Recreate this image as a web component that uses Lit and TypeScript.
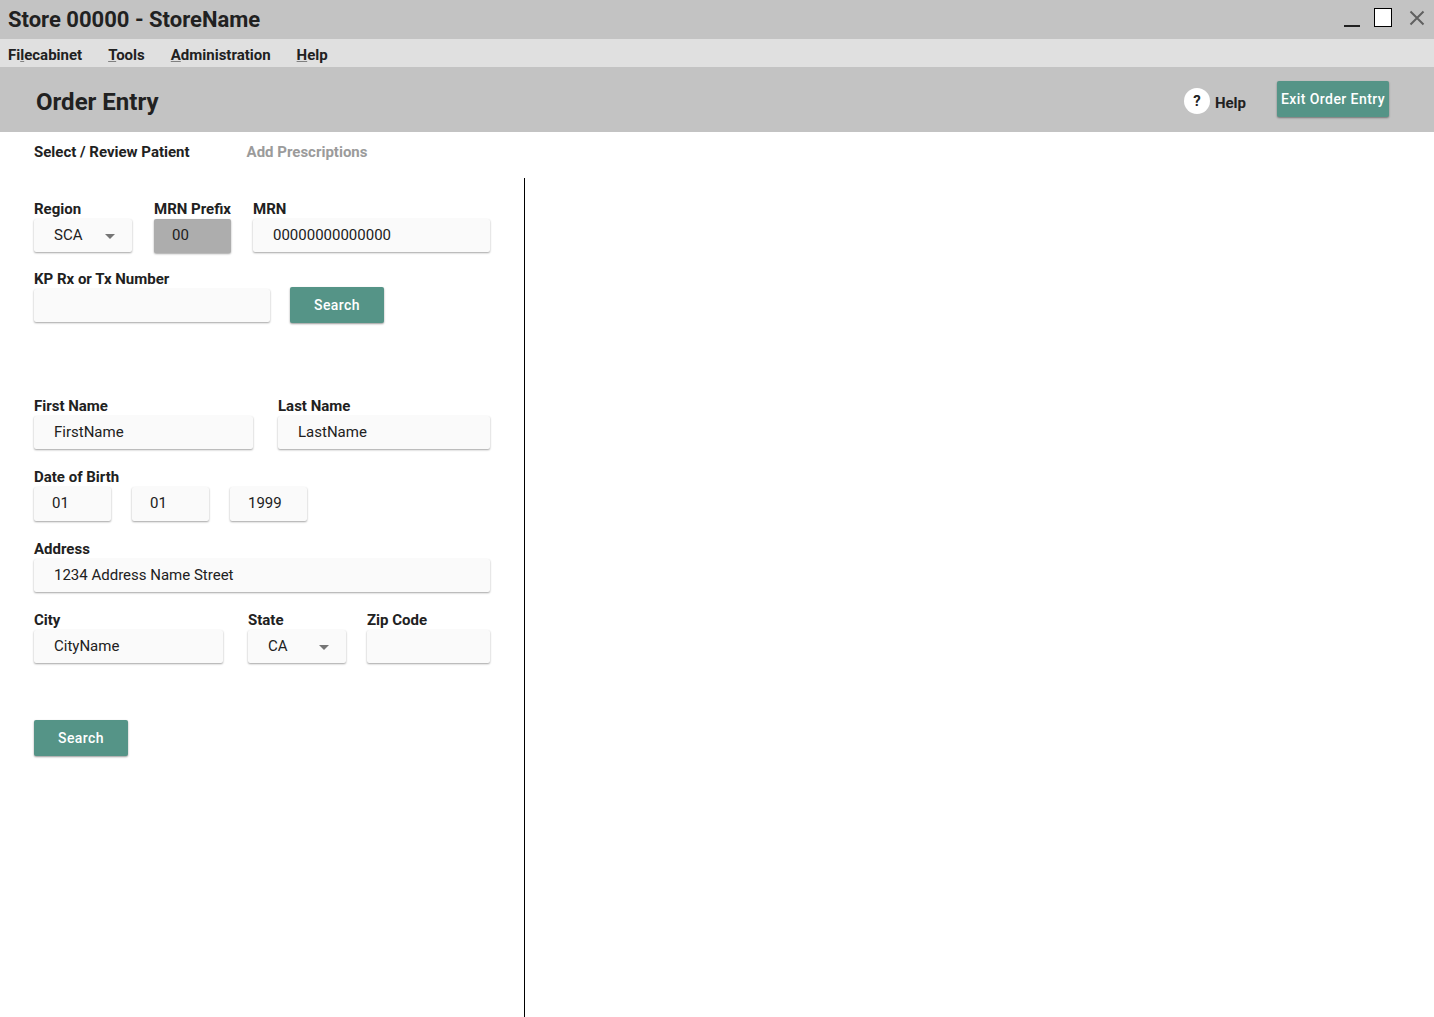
import { LitElement, html, css } from "lit";
import { customElement, property, state } from "lit/decorators.js";
import { classMap } from "lit/directives/class-map.js";

type Kind = "text" | "select";

@customElement("form-field")
class FormField extends LitElement {
  @property() label = "";
  @property() value = "";
  @property() kind: Kind = "text";
  @property() tone = "plain";

  static styles = css`
    :host {
      display: block;
      min-width: 0;
    }
    .label {
      display: block;
      font-weight: 700;
      line-height: 20px;
      white-space: nowrap;
    }
    .box {
      display: grid;
    }
    .control {
      grid-area: 1 / 1;
      box-sizing: border-box;
      width: 100%;
      height: 33px;
      margin: 0;
      padding: 0 20px 2px;
      border: 0;
      border-radius: 2px;
      background: #fafafa;
      color: #212121;
      font: inherit;
      appearance: none;
      box-shadow: 0 1px 2px rgba(0, 0, 0, 0.36);
    }
    .compact {
      height: 34px;
      padding: 0 18px 2px;
    }
    .locked {
      background: #adadad;
    }
    .arrow {
      grid-area: 1 / 1;
      place-self: center end;
      margin-right: 10px;
      pointer-events: none;
      fill: #757575;
    }
  `;

  render() {
    return html`
      <label class="label" for="control">${this.label}</label>
      <div class="box">
        ${this.kind === "select"
          ? html`
              <select class="control" id="control">
                <option selected>${this.value}</option>
              </select>
              <svg class="arrow" width="24" height="24" viewBox="0 0 24 24" aria-hidden="true">
                <path d="M7 10l5 5 5-5z" />
              </svg>
            `
          : html`
              <input
                class=${classMap({
                  control: true,
                  compact: this.tone !== "plain",
                  locked: this.tone === "locked",
                })}
                id="control"
                type="text"
                ?readonly=${this.tone === "locked"}
                .value=${this.value}
              />
            `}
      </div>
    `;
  }
}

@customElement("date-field")
class DateField extends LitElement {
  @property() label = "";
  @property({ attribute: false }) parts: { name: string; value: string }[] = [];

  static styles = css`
    :host {
      display: block;
    }
    .group {
      margin: 0;
      padding: 0;
      border: 0;
    }
    .legend {
      padding: 0;
      font-weight: 700;
      line-height: 20px;
    }
    .parts {
      display: flex;
      gap: 21px;
    }
    .part {
      box-sizing: border-box;
      width: 77px;
      height: 34px;
      padding: 0 18px 2px;
      border: 0;
      border-radius: 2px;
      background: #fafafa;
      color: #212121;
      font: inherit;
      box-shadow: 0 1px 2px rgba(0, 0, 0, 0.36);
    }
  `;

  render() {
    return html`
      <fieldset class="group">
        <legend class="legend">${this.label}</legend>
        <div class="parts">
          ${this.parts.map(
            (p) => html`<input class="part" type="text" aria-label=${p.name} .value=${p.value} />`
          )}
        </div>
      </fieldset>
    `;
  }
}

@customElement("app-root")
class AppRoot extends LitElement {
  @state() private tab = 0;

  private menu = [
    ["Fi", "l", "ecabinet"],
    ["", "T", "ools"],
    ["", "A", "dministration"],
    ["", "H", "elp"],
  ];
  private tabs = ["Select / Review Patient", "Add Prescriptions"];

  static styles = css`
    :host {
      display: flex;
      flex-direction: column;
      min-height: 100vh;
      background: #fff;
      color: #212121;
      font-family: Roboto, "Liberation Sans", sans-serif;
      font-size: 15px;
      line-height: 20px;
    }
    .titlebar {
      display: flex;
      align-items: center;
      justify-content: space-between;
      height: 39px;
      padding: 0 8px;
      background: #c3c3c3;
    }
    .title {
      margin: 0;
      font-size: 22px;
      line-height: 28px;
      font-weight: 700;
    }
    .window {
      display: flex;
      gap: 12px;
      padding-bottom: 4px;
    }
    .plain {
      display: flex;
      align-items: center;
      margin: 0;
      padding: 0;
      border: 0;
      background: none;
      color: inherit;
      font: inherit;
      font-weight: 700;
      cursor: pointer;
    }
    .menu {
      display: flex;
      align-items: center;
      gap: 26px;
      height: 28px;
      padding: 4px 8px 0;
      box-sizing: border-box;
      background: #e0e0e0;
    }
    .entry {
      color: inherit;
      font-weight: 700;
      text-decoration: none;
    }
    .key {
      text-decoration: underline;
      text-decoration-color: #808080;
      text-decoration-thickness: 1px;
      text-underline-offset: 1px;
      text-decoration-skip-ink: none;
    }
    .header {
      display: flex;
      align-items: center;
      gap: 31px;
      height: 65px;
      padding: 0 45px 2px 36px;
      box-sizing: border-box;
      background: #c3c3c3;
    }
    .heading {
      flex: 1;
      margin: 0;
      padding-top: 6px;
      font-size: 24px;
      line-height: 28px;
      font-weight: 700;
    }
    .help {
      gap: 5px;
      padding-top: 4px;
    }
    .help-text {
      padding-top: 4px;
    }
    .mark {
      width: 26px;
      border-radius: 50%;
      background: #fff;
      line-height: 26px;
      text-align: center;
    }
    .button {
      height: 36px;
      padding: 0 4px;
      border: 0;
      border-radius: 2px;
      background: #559487;
      color: #fff;
      font-family: inherit;
      font-size: 14px;
      font-weight: 500;
      letter-spacing: 0.03em;
      white-space: nowrap;
      cursor: pointer;
      box-shadow: 0 1px 2px rgba(0, 0, 0, 0.4);
    }
    .search {
      width: 94px;
    }
    .tabs {
      display: flex;
      gap: 57px;
      height: 46px;
      padding: 10px 34px 0;
      box-sizing: border-box;
    }
    .tab {
      height: 20px;
      color: #9b9b9b;
    }
    .current {
      color: #212121;
    }
    .main {
      flex: 1;
      display: grid;
      grid-template-columns: minmax(480px, 525fr) 909fr;
    }
    .panel {
      padding: 21px 34px;
      border-right: 1px solid #000;
    }
    .form {
      display: grid;
      gap: 16px;
    }
    .patient {
      gap: 18px;
      margin-top: 73px;
    }
    .row {
      display: grid;
      align-items: start;
    }
    .record {
      grid-template-columns: 98px 77px 1fr;
      gap: 22px;
    }
    .number {
      grid-template-columns: 236px 94px;
      gap: 20px;
      height: 54px;
    }
    .names {
      grid-template-columns: 219fr 212fr;
      gap: 25px;
    }
    .place {
      grid-template-columns: 189fr 242fr;
      gap: 25px;
    }
    .region {
      grid-template-columns: 98px 1fr;
      gap: 21px;
    }
    .end {
      align-self: end;
    }
    .submit {
      margin-top: 39px;
    }
  `;

  render() {
    return html`
      <div class="titlebar">
        <h1 class="title">Store 00000 - StoreName</h1>
        <div class="window">
          <button class="plain" aria-label="Minimize">
            <svg width="18" height="20" viewBox="0 0 18 20"><path d="M0 18h16" stroke="#212121" stroke-width="2" /></svg>
          </button>
          <button class="plain" aria-label="Maximize">
            <svg width="18" height="19" viewBox="0 0 18 19"><rect x=".5" y=".5" width="17" height="18" fill="#fff" stroke="#000" /></svg>
          </button>
          <button class="plain" aria-label="Close">
            <svg width="22" height="20" viewBox="0 0 22 20"><path d="M6.500 3.500l13 13m0-13l-13 13" stroke="#606060" stroke-width="2" /></svg>
          </button>
        </div>
      </div>
      <nav class="menu" aria-label="Main menu">
        ${this.menu.map(
          ([before, key, after]) =>
            html`<a class="entry" href="#">${before}<span class="key">${key}</span>${after}</a>`
        )}
      </nav>
      <header class="header">
        <h2 class="heading">Order Entry</h2>
        <button class="plain help"><span class="mark">?</span><span class="help-text">Help</span></button>
        <button class="button">Exit Order Entry</button>
      </header>
      <nav class="tabs" aria-label="Order steps">
        ${this.tabs.map(
          (name, i) => html`
            <button
              class=${classMap({ plain: true, tab: true, current: this.tab === i })}
              @click=${() => (this.tab = i)}
            >${name}</button>
          `
        )}
      </nav>
      <main class="main">
        <section class="panel">
          <form class="form" @submit=${(e: Event) => e.preventDefault()}>
            <div class="row record">
              <form-field label="Region" kind="select" value="SCA"></form-field>
              <form-field label="MRN Prefix" tone="locked" value="00"></form-field>
              <form-field label="MRN" value="00000000000000"></form-field>
            </div>
            <div class="row number">
              <form-field label="KP Rx or Tx Number"></form-field>
              <button class="button end">Search</button>
            </div>
          </form>
          <form class="form patient" @submit=${(e: Event) => e.preventDefault()}>
            <div class="row names">
              <form-field label="First Name" value="FirstName"></form-field>
              <form-field label="Last Name" value="LastName"></form-field>
            </div>
            <date-field
              label="Date of Birth"
              .parts=${[
                { name: "Month", value: "01" },
                { name: "Day", value: "01" },
                { name: "Year", value: "1999" },
              ]}
            ></date-field>
            <form-field label="Address" value="1234 Address Name Street"></form-field>
            <div class="row place">
              <form-field label="City" value="CityName"></form-field>
              <div class="row region">
                <form-field label="State" kind="select" value="CA"></form-field>
                <form-field label="Zip Code"></form-field>
              </div>
            </div>
            <button class="button search submit">Search</button>
          </form>
        </section>
        <section aria-label="Results"></section>
      </main>
    `;
  }
}
